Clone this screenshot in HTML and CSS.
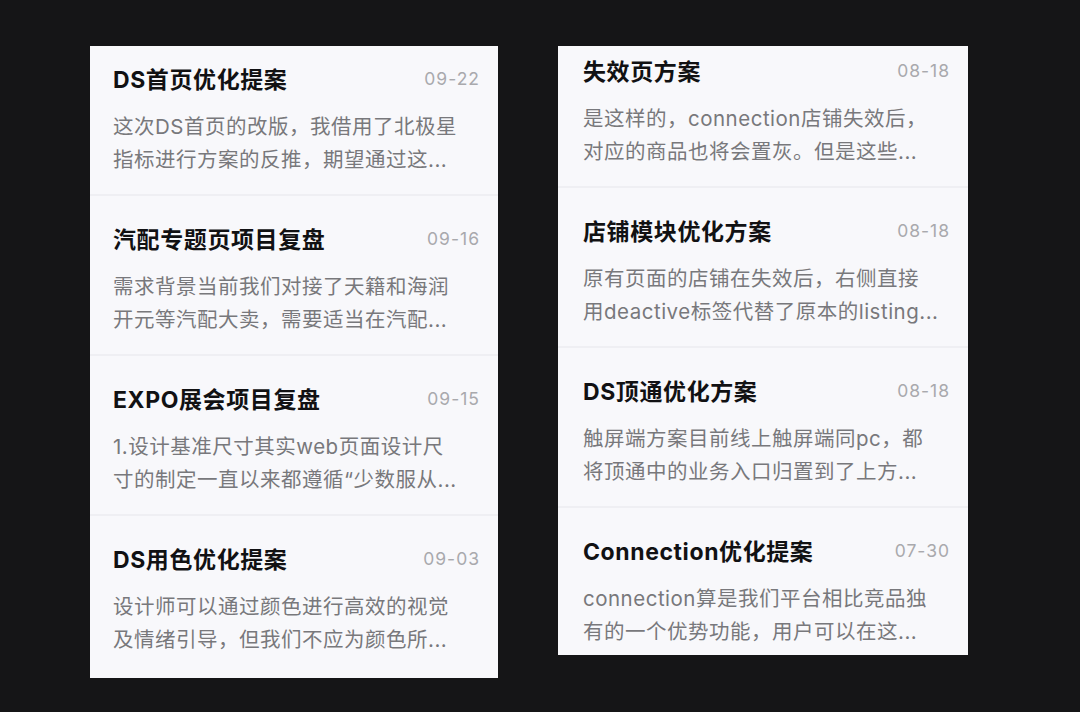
FILE: index.html
```html
<!DOCTYPE html>
<html lang="zh">
<head>
<meta charset="utf-8">
<link rel="stylesheet" href="styles.css">
</head>
<body>
<div class="stage">
  <div class="panel panel-left">
    <div class="list list-left">
      <div class="item">
        <div class="head"><span class="title">DS首页优化提案</span><span class="date">09-22</span></div>
        <p class="body">这次DS首页的改版，我借用了北极星<br>指标进行方案的反推，期望通过这...</p>
      </div>
      <div class="item">
        <div class="head"><span class="title">汽配专题页项目复盘</span><span class="date">09-16</span></div>
        <p class="body">需求背景当前我们对接了天籍和海润<br>开元等汽配大卖，需要适当在汽配...</p>
      </div>
      <div class="item">
        <div class="head"><span class="title">EXPO展会项目复盘</span><span class="date">09-15</span></div>
        <p class="body">1.设计基准尺寸其实web页面设计尺<br>寸的制定一直以来都遵循“少数服从...</p>
      </div>
      <div class="item">
        <div class="head"><span class="title">DS用色优化提案</span><span class="date">09-03</span></div>
        <p class="body">设计师可以通过颜色进行高效的视觉<br>及情绪引导，但我们不应为颜色所...</p>
      </div>
    </div>
  </div>
  <div class="panel panel-right">
    <div class="list list-right">
      <div class="item">
        <div class="head"><span class="title">失效页方案</span><span class="date">08-18</span></div>
        <p class="body">是这样的，connection店铺失效后，<br>对应的商品也将会置灰。但是这些...</p>
      </div>
      <div class="item">
        <div class="head"><span class="title">店铺模块优化方案</span><span class="date">08-18</span></div>
        <p class="body">原有页面的店铺在失效后，右侧直接<br>用deactive标签代替了原本的listing...</p>
      </div>
      <div class="item">
        <div class="head"><span class="title">DS顶通优化方案</span><span class="date">08-18</span></div>
        <p class="body">触屏端方案目前线上触屏端同pc，都<br>将顶通中的业务入口归置到了上方...</p>
      </div>
      <div class="item">
        <div class="head"><span class="title">Connection优化提案</span><span class="date">07-30</span></div>
        <p class="body">connection算是我们平台相比竞品独<br>有的一个优势功能，用户可以在这...</p>
      </div>
    </div>
  </div>
</div>
</body>
</html>
```

FILE: styles.css
```css
html, body {
  margin: 0;
  padding: 0;
  background: #151517;
}
body {
  width: 1080px;
  height: 712px;
  overflow: hidden;
  font-family: Inter, "Noto Sans CJK SC", sans-serif;
}
.stage {
  display: flex;
  align-items: flex-start;
  padding: 46px 0 0 90px;
  gap: 60px;
}
.panel {
  background: #f8f8fb;
  overflow: hidden;
}
.panel-left {
  width: 408px;
  height: 632px;
}
.panel-right {
  width: 410px;
  height: 609px;
}
.list-left { margin-top: -12px; }
.list-right { margin-top: -20px; }
.item {
  height: 160px;
  box-sizing: border-box;
  border-top: 2px solid #efeff3;
  padding: 26px 18px 0 23px;
}
.panel-right .item {
  padding: 26px 18px 0 25px;
}
.head {
  display: flex;
  justify-content: space-between;
  align-items: center;
  height: 32px;
}
.title {
  font-size: 23px;
  font-weight: 700;
  color: #111113;
  letter-spacing: 0.6px;
}
.date {
  font-size: 17.5px;
  color: #a9a9ad;
  letter-spacing: 1px;
  font-weight: 400;
}
.body {
  margin: 16px 0 0;
  font-size: 20.5px;
  line-height: 33px;
  color: #78787c;
  letter-spacing: 0.5px;
  white-space: nowrap;
}
```
